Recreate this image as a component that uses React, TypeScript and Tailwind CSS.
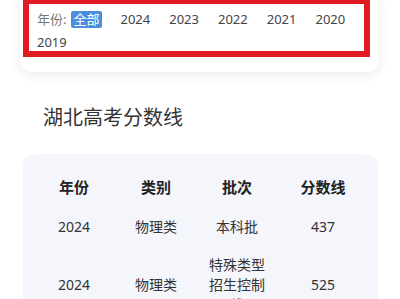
const years = ['2024', '2023', '2022', '2021', '2020', '2019']

const rows = [
  { year: '2024', type: '物理类', batch: '本科批', score: '437' },
  { year: '2024', type: '物理类', batch: '特殊类型招生控制线', score: '525' },
]

export default function App() {
  return (
    <div className="w-[400px] h-[299px] overflow-hidden bg-white font-['Noto_Sans','Noto_Sans_CJK_SC',sans-serif]">
      {/* filter card */}
      <div className="mx-[20px] w-[359px] rounded-b-[12px] bg-white pb-[15px] shadow-[0_3px_12px_rgba(0,0,0,0.08)]">
        <div className="-mt-[2px] ml-[3px] w-[347px] border-[6px] border-[#e01b24] px-[8px] pt-[7px]">
          <div className="flex flex-wrap items-center gap-x-[19px] gap-y-[6px] text-[13px] leading-[17px] text-[#444]">
            <div className="flex items-center">
              <span className="mr-[5px] text-[#777]">年份:</span>
              <span className="rounded-[2px] bg-[#4a8fdc] px-[2px] text-white">全部</span>
            </div>
            {years.map((y) => (
              <span key={y}>{y}</span>
            ))}
          </div>
        </div>
      </div>

      <h2 className="mt-[32px] ml-[43px] text-[20px] leading-[28px] font-normal text-[#333]">湖北高考分数线</h2>

      {/* score table */}
      <div className="mt-[22px] ml-[23px] w-[355px] rounded-[12px] bg-[#f5f5fc] pt-[12px] pl-[10px]">
        <div className="grid grid-cols-[82px_82px_80px_92px] py-[11px] text-center text-[15px] leading-[20px] font-bold text-[#222]">
          <div>年份</div>
          <div>类别</div>
          <div>批次</div>
          <div>分数线</div>
        </div>
        {rows.map((r, i) => (
          <div
            key={i}
            className="grid grid-cols-[82px_82px_80px_92px] items-center py-[9px] text-center text-[14px] leading-[20px] text-[#333]"
          >
            <div>{r.year}</div>
            <div>{r.type}</div>
            <div className="px-[8px]">{r.batch}</div>
            <div>{r.score}</div>
          </div>
        ))}
      </div>
    </div>
  )
}
